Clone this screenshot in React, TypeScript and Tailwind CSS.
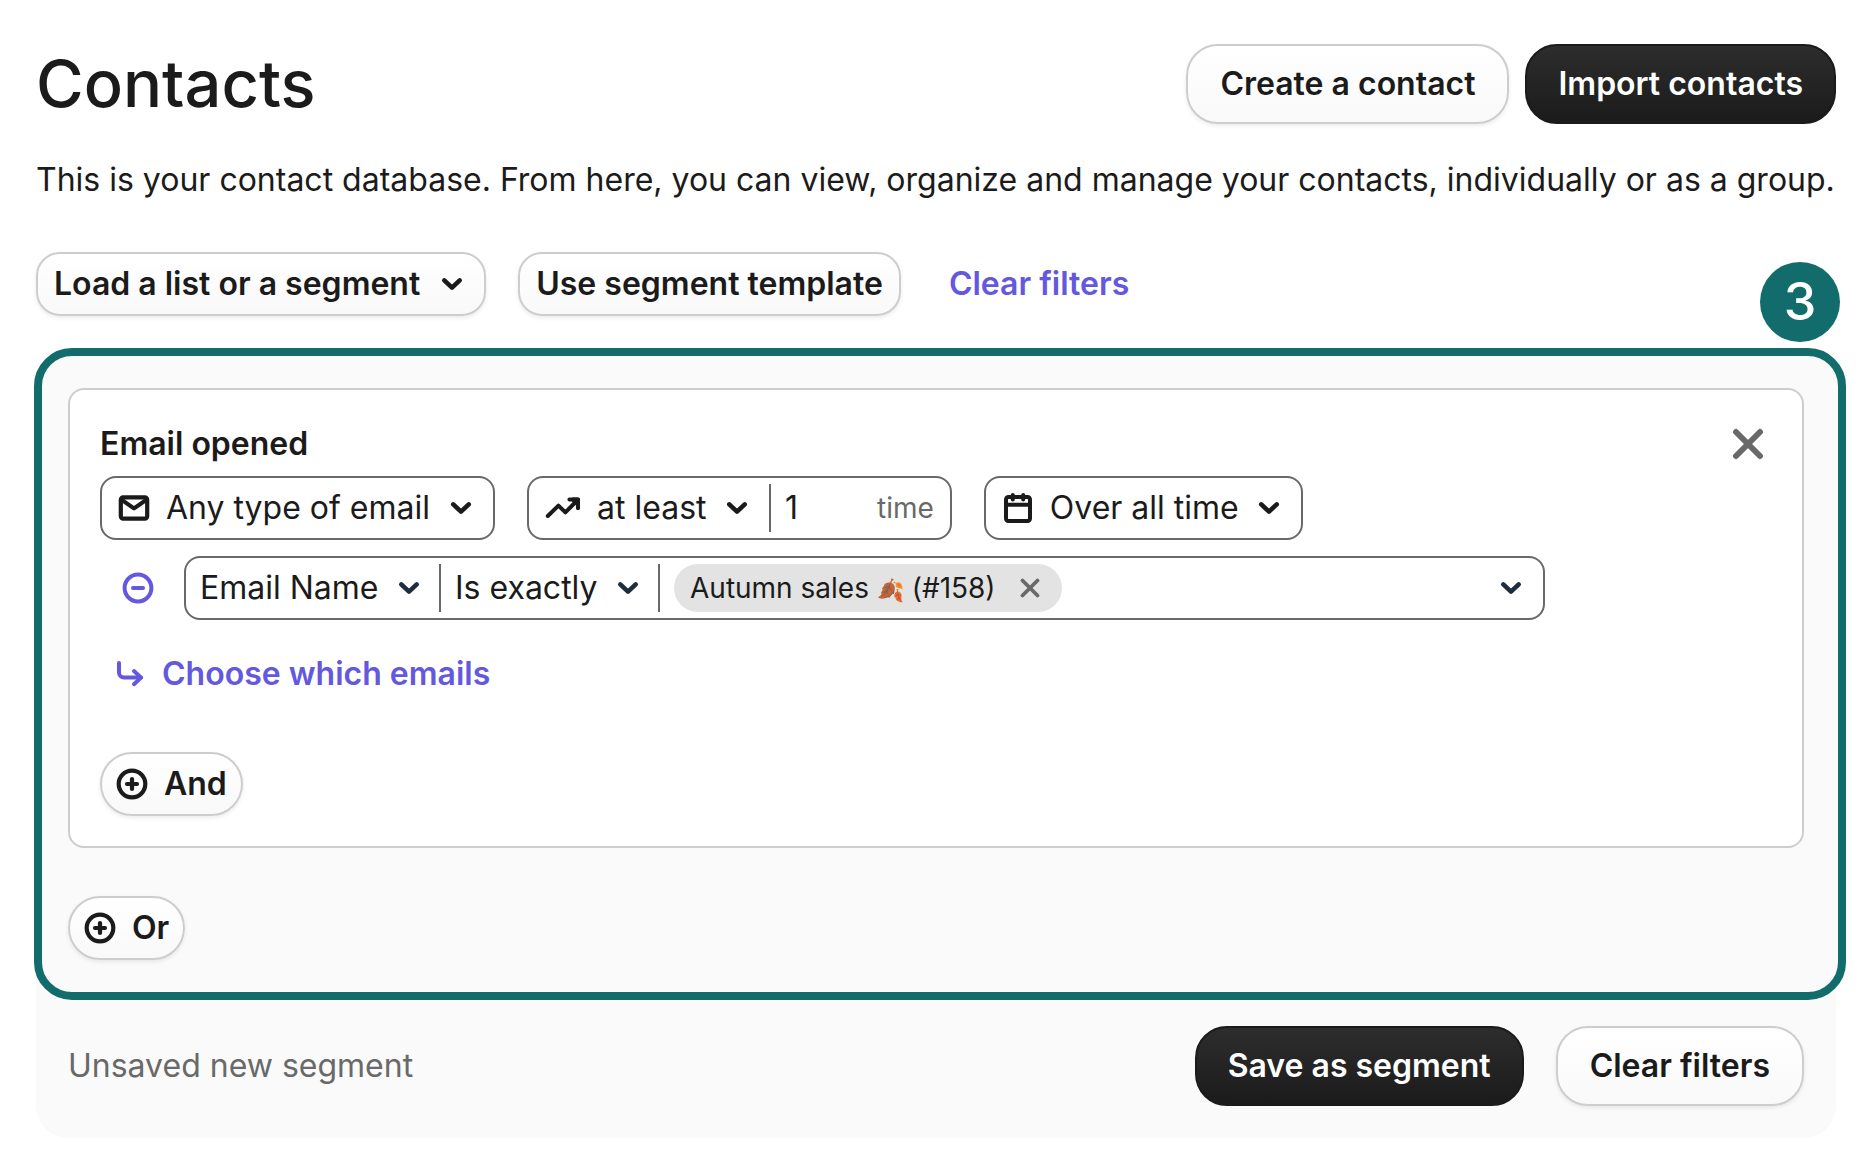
import { useState } from 'react'
import type { ReactNode } from 'react'
import clsx from 'clsx'

type IconProps = { className?: string }

const ChevronIcon = ({ className }: IconProps) => (
  <svg
    viewBox="0 0 32 32"
    fill="none"
    stroke="currentColor"
    strokeWidth="4.6"
    strokeLinecap="round"
    strokeLinejoin="round"
    className={clsx('pointer-events-none size-8 shrink-0', className)}
    aria-hidden="true"
  >
    <path d="M8.3 12.4 16 19.6l7.7-7.2" />
  </svg>
)

const MailIcon = () => (
  <svg viewBox="0 0 32 32" fill="none" stroke="currentColor" strokeWidth="4.2" strokeLinejoin="round" className="size-8 shrink-0" aria-hidden="true">
    <rect x="2.8" y="5.4" width="26.4" height="21.2" rx="2.4" />
    <path d="M3.4 7.6 16 16.4l12.6-8.8" />
  </svg>
)

const TrendIcon = () => (
  <svg
    viewBox="0 0 36 32"
    fill="none"
    stroke="currentColor"
    strokeWidth="4"
    strokeLinecap="round"
    strokeLinejoin="round"
    className="h-8 w-9 shrink-0"
    aria-hidden="true"
  >
    <path d="M2.8 24 13.4 13.6l7 6.8L32.6 8" />
    <path d="M24.4 7.6h8.6v8.6" />
    <path d="M28 7.6h5v5z" fill="currentColor" />
  </svg>
)

const CalendarIcon = () => (
  <svg viewBox="0 0 32 32" fill="none" stroke="currentColor" strokeWidth="4" strokeLinecap="round" strokeLinejoin="round" className="size-8 shrink-0" aria-hidden="true">
    <rect x="4" y="5" width="24" height="24" rx="2.4" />
    <path d="M4 12.8h24" />
    <path d="M10.8 3v4.6M21.2 3v4.6" />
  </svg>
)

const PlusCircleIcon = () => (
  <svg viewBox="0 0 32 32" fill="none" stroke="currentColor" strokeWidth="4.2" strokeLinecap="round" className="size-8 shrink-0" aria-hidden="true">
    <circle cx="16" cy="16" r="13.3" />
    <path d="M11 16h10M16 11v10" />
  </svg>
)

const MinusCircleIcon = () => (
  <svg viewBox="0 0 32 32" fill="none" stroke="currentColor" strokeWidth="4" strokeLinecap="round" className="size-8 shrink-0" aria-hidden="true">
    <circle cx="16" cy="16" r="13.4" />
    <path d="M11 16h10" />
  </svg>
)

const CornerArrowIcon = () => (
  <svg
    viewBox="0 0 32 32"
    fill="none"
    stroke="currentColor"
    strokeWidth="4"
    strokeLinecap="round"
    strokeLinejoin="round"
    className="size-8 shrink-0"
    aria-hidden="true"
  >
    <path d="M5 5v9.6a5 5 0 0 0 5 5h17" />
    <path d="m20 13 7 6.6-7 6.6" />
  </svg>
)

const CloseIcon = ({ className }: IconProps) => (
  <svg viewBox="0 0 32 32" fill="none" stroke="currentColor" strokeWidth="6" strokeLinecap="round" className={className} aria-hidden="true">
    <path d="m4 4 24 24M28 4 4 28" />
  </svg>
)

type ButtonProps = {
  children: ReactNode
  variant?: 'light' | 'dark'
  size?: 'md' | 'lg'
  pill?: boolean
  onClick?: () => void
}

const Button = ({ children, variant = 'light', size = 'md', pill = false, onClick }: ButtonProps) => (
  <button
    type="button"
    onClick={onClick}
    className={clsx(
      'flex shrink-0 cursor-pointer items-center border-2 bg-linear-to-b font-semibold whitespace-nowrap',
      size === 'lg' && 'h-20 rounded-[32px]',
      size === 'lg' && (variant === 'dark' ? 'px-[31px]' : 'px-8'),
      size === 'md' && 'h-16 px-4',
      size === 'md' && (pill ? 'rounded-full' : 'rounded-3xl'),
      variant === 'dark'
        ? 'border-[#1b1b1b] from-[#2d2d2d] to-[#1b1b1b] text-white'
        : 'border-[#cdcdcd] from-white to-[#f9f9f9] text-[#1b1b1b] shadow-[0_2px_4px_rgba(0,0,0,0.08)]',
    )}
  >
    {children}
  </button>
)

type SelectProps = {
  label: string
  options: string[]
  chevronClass?: string
}

const Select = ({ label, options, chevronClass }: SelectProps) => {
  const [value, setValue] = useState(options[0])

  return (
    <span className="flex items-center">
      <select
        aria-label={label}
        value={value}
        onChange={(event) => setValue(event.target.value)}
        className="-mr-[34px] h-12 cursor-pointer appearance-none bg-transparent pr-12 focus:outline-none"
      >
        {options.map((option) => (
          <option key={option}>{option}</option>
        ))}
      </select>
      <ChevronIcon className={chevronClass} />
    </span>
  )
}

const Field = ({ children, className }: { children: ReactNode; className?: string }) => (
  <div className={clsx('flex h-16 items-center rounded-2xl border-2 border-[#696969] bg-white', className)}>{children}</div>
)

const Divider = () => <span className="h-12 w-0.5 shrink-0 bg-[#696969]" />

const initialTags = [{ name: 'Autumn sales', emoji: '🍂', id: '(#158)' }]

export default function App() {
  const [times, setTimes] = useState('1')
  const [tags, setTags] = useState(initialTags)

  return (
    <main className="min-h-screen bg-white pt-11 pr-8 pb-5 pl-9 font-['Inter',sans-serif] text-[32px] leading-[48px] text-[#1b1b1b]">
      <header className="flex items-center justify-between">
        <h1 className="text-[65px] leading-[80px] font-medium">Contacts</h1>
        <div className="flex gap-4">
          <Button size="lg">Create a contact</Button>
          <Button size="lg" variant="dark">
            Import contacts
          </Button>
        </div>
      </header>

      <p className="mt-8 whitespace-nowrap">
        This is your contact database. From here, you can view, organize and manage your contacts, individually or as a group.
      </p>

      <div className="mt-12 flex items-center gap-8">
        <Button>
          Load a list or a segment
          <ChevronIcon className="ml-4" />
        </Button>
        <Button>Use segment template</Button>
        <button type="button" className="ml-4 cursor-pointer font-semibold text-[#6358de]">
          Clear filters
        </button>
      </div>

      <section className="relative mt-8 rounded-t-[40px] rounded-b-[32px] bg-[#fafafa]">
        <span className="absolute -top-[86px] -right-1 flex size-20 items-center justify-center rounded-full bg-[#126c6b] text-[52px] font-medium text-white">
          3
        </span>

        <div className="-mr-[10px] -ml-[2px] rounded-[38px] border-8 border-[#126c6b] bg-[#fafafa] py-8 pr-[34px] pl-[26px]">
          <div className="rounded-2xl border-2 border-[#cdcdcd] bg-white p-[30px]">
            <div className="flex items-center justify-between">
              <h2 className="font-semibold">Email opened</h2>
              <button type="button" aria-label="Remove condition" className="mr-2 cursor-pointer text-[#696969]">
                <CloseIcon className="size-8" />
              </button>
            </div>

            <div className="mt-2 flex gap-8">
              <Field className="gap-4 px-4">
                <MailIcon />
                <Select label="Type of email" options={['Any type of email']} />
              </Field>
              <Field className="pl-4">
                <TrendIcon />
                <span className="mx-4">
                  <Select label="Frequency" options={['at least']} />
                </span>
                <Divider />
                <input
                  aria-label="Number of times"
                  value={times}
                  onChange={(event) => setTimes(event.target.value)}
                  className="w-[106px] bg-transparent pl-[14px] focus:outline-none"
                />
                <span className="mr-4 text-[28px] text-[#696969]">time</span>
              </Field>
              <Field className="gap-4 px-4">
                <CalendarIcon />
                <Select label="Period" options={['Over all time']} />
              </Field>
            </div>

            <div className="mt-4 flex items-center">
              <button type="button" aria-label="Remove email filter" className="mr-[30px] ml-[22px] cursor-pointer text-[#6358de]">
                <MinusCircleIcon />
              </button>
              <Field className="mr-[227px] flex-1 gap-[14px] pr-4 pl-[14px]">
                <Select label="Email attribute" options={['Email Name']} chevronClass="text-[#1f2d3d]" />
                <Divider />
                <Select label="Operator" options={['Is exactly']} chevronClass="text-[#1f2d3d]" />
                <Divider />
                {tags.map((tag) => (
                  <span key={tag.id} className="flex h-12 items-center gap-6 rounded-full bg-[#e3e3e3] pr-[22px] pl-4 text-[28px]">
                    <span className="whitespace-nowrap">
                      {tag.name} <span className="text-[22px] leading-none">{tag.emoji}</span> {tag.id}
                    </span>
                    <button
                      type="button"
                      aria-label={`Remove ${tag.name}`}
                      onClick={() => setTags(tags.filter((item) => item.id !== tag.id))}
                      className="cursor-pointer text-[#696969]"
                    >
                      <CloseIcon className="size-5" />
                    </button>
                  </span>
                ))}
                <button type="button" aria-label="Show emails" className="ml-auto cursor-pointer">
                  <ChevronIcon className="text-[#1f2d3d]" />
                </button>
              </Field>
            </div>

            <button type="button" className="mt-8 ml-[14px] flex h-11 cursor-pointer items-center gap-4 font-semibold text-[#6358de]">
              <CornerArrowIcon />
              Choose which emails
            </button>

            <div className="mt-14 flex">
              <Button pill>
                <span className="-ml-0.5 mr-4">
                  <PlusCircleIcon />
                </span>
                <span className="-mr-0.5">And</span>
              </Button>
            </div>
          </div>

          <div className="mt-12 flex">
            <Button pill>
              <span className="-ml-0.5 mr-4">
                <PlusCircleIcon />
              </span>
              <span className="-mr-0.5">Or</span>
            </Button>
          </div>
        </div>

        <footer className="flex items-center justify-between px-8 pt-[26px] pb-8">
          <p className="text-[#696969]">Unsaved new segment</p>
          <div className="flex gap-8">
            <Button size="lg" variant="dark">
              Save as segment
            </Button>
            <Button size="lg">Clear filters</Button>
          </div>
        </footer>
      </section>
    </main>
  )
}
